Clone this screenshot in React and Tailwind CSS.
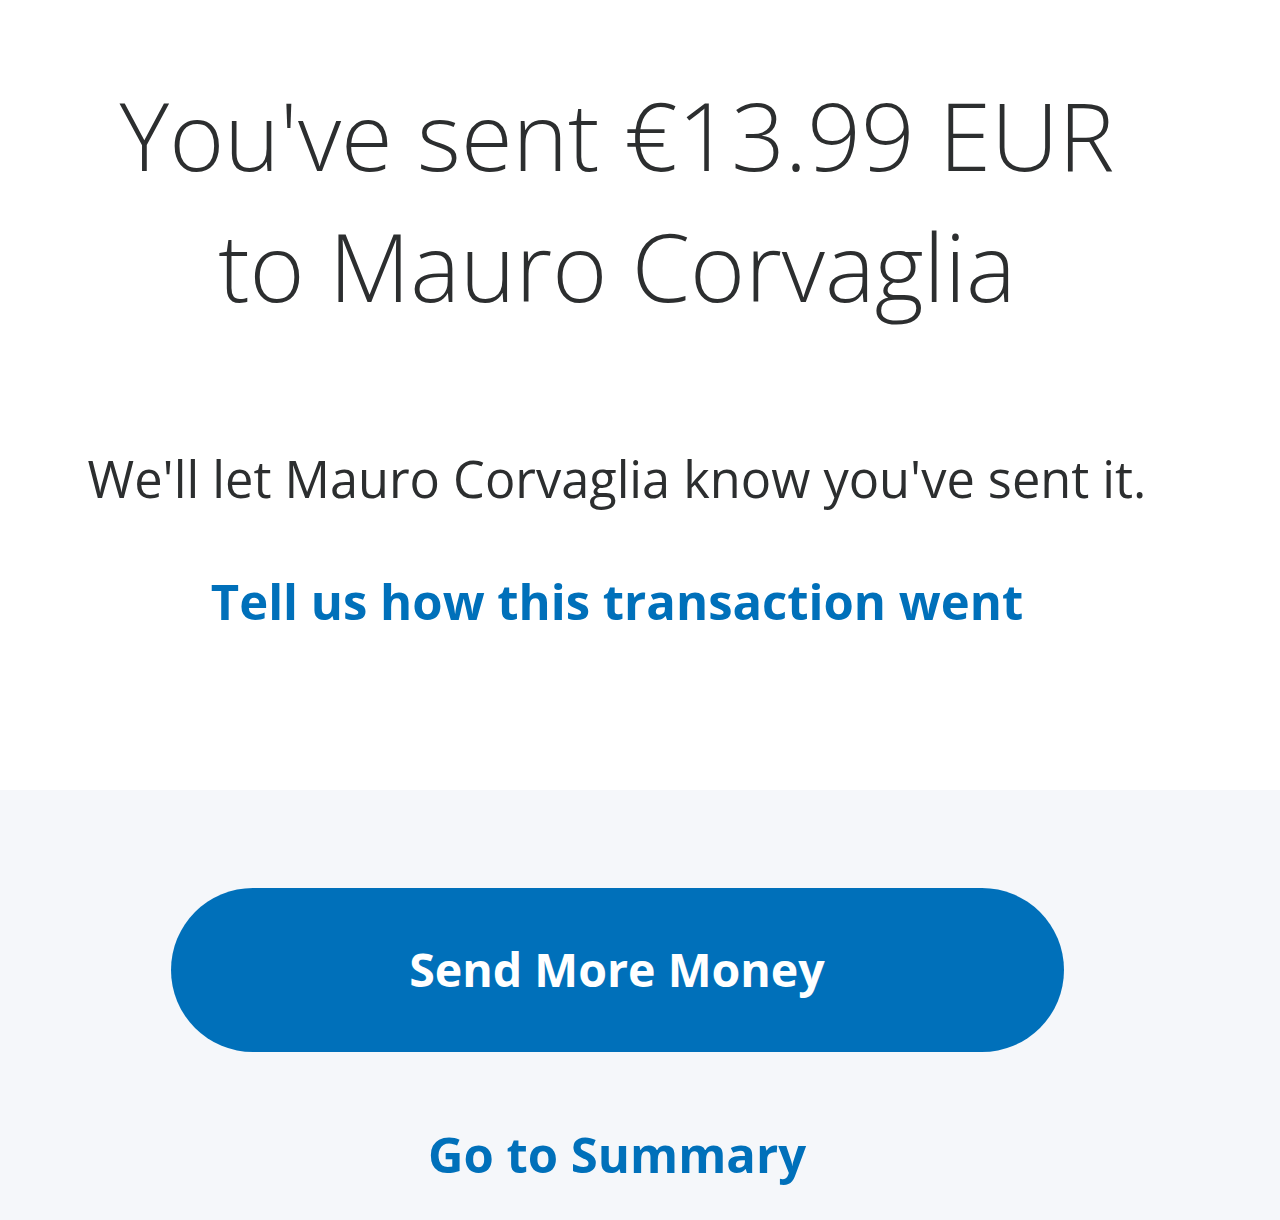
import React from 'react';

const App = () => {
  return (
    <div className="w-[1280px] h-[1220px] bg-white overflow-hidden" style={{ fontFamily: '"Open Sans", "Noto Sans", sans-serif' }}>
      {/* Confirmation message */}
      <section className="h-[790px] bg-white">
        <div className="w-[1234px] pt-[70px] text-center">
          <h1 className="text-[94px] leading-[131px] font-light text-[#2c2e2f]">
            You've sent €13.99 EUR
            <br />
            to Mauro Corvaglia
          </h1>
          <p className="mt-[117px] text-[50.5px] leading-[60px] text-[#2c2e2f]">
            We'll let Mauro Corvaglia know you've sent it.
          </p>
          <a href="#" className="block mt-[62px] text-[49px] leading-[60px] font-bold text-[#0070ba]">
            Tell us how this transaction went
          </a>
        </div>
      </section>

      {/* Actions */}
      <section className="h-[430px] bg-[#f5f7fa]">
        <div className="w-[1234px] pt-[98px] flex flex-col items-center">
          <button className="w-[893px] h-[164px] rounded-full bg-[#0070ba] text-white text-[46.5px] font-bold">
            Send More Money
          </button>
          <a href="#" className="mt-[72px] text-[49px] leading-[60px] font-bold text-[#0070ba]">
            Go to Summary
          </a>
        </div>
      </section>
    </div>
  );
};

export default App;
